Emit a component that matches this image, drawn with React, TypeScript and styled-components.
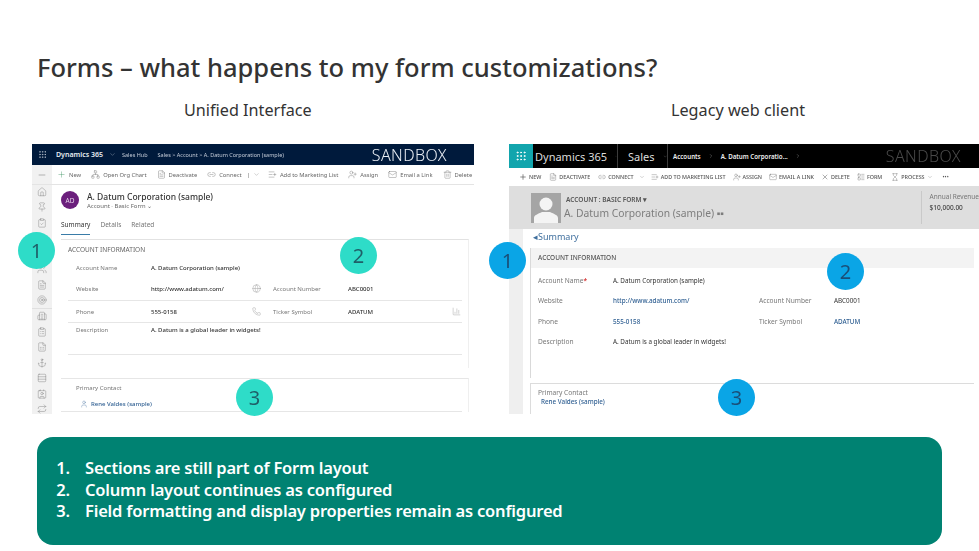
import styled, { createGlobalStyle } from "styled-components"
import {
    Plus, Network, FileText, Link2, ChevronDown, ListPlus, UserPlus, Mail, Trash2, Minus, Home, Pin,
    ClipboardCheck, Globe, Phone, BarChart3, User, X, LayoutList, Hourglass, Grip, Users, FileSpreadsheet,
    Building2, Anchor, Contact, Repeat, ClipboardList, Target, ChevronRight, Rows3
} from "lucide-react"

const GlobalStyle = createGlobalStyle`
    html, body {
        margin: 0;
        padding: 0;
        background: #fff;
        font-family: "Noto Sans", "Open Sans", sans-serif;
    }
`

const Slide = styled.div`
    width: 979px;
    height: 551px;
    overflow: hidden;
    position: relative;
    display: flex;
    flex-direction: column;
`

const Title = styled.h1`
    margin: 50px 0 0 37px;
    height: 34px;
    line-height: 34px;
    font-size: 25.5px;
    font-weight: 500;
    color: #333;
    white-space: nowrap;
`

const Panes = styled.div`
    display: flex;
    margin: 14px 0 0 32px;
    gap: 35px;
`

const Pane = styled.div<{ $width: number }>`
    width: ${({ $width }) => $width}px;
    display: flex;
    flex-direction: column;
`

const PaneTitle = styled.div<{ $indent: number }>`
    height: 24px;
    line-height: 24px;
    margin-left: ${({ $indent }) => $indent}px;
    font-size: 16.2px;
    color: #333;
    white-space: nowrap;
`

const Shot = styled.div`
    height: 270px;
    margin-top: 22px;
    position: relative;
    display: flex;
    flex-direction: column;
    background: #fff;
`

const ShotInner = styled.div`
    flex: 1;
    min-height: 0;
    display: flex;
    flex-direction: column;
    overflow: hidden;
    filter: blur(0.35px);
`

const Badge = styled.div<{ $x: number; $y: number; $blue?: boolean }>`
    position: absolute;
    left: ${({ $x }) => $x}px;
    top: ${({ $y }) => $y}px;
    width: 37px;
    height: 37px;
    border-radius: 50%;
    background: ${({ $blue }) => ($blue ? "#0aa5e6" : "#2edcc8")};
    color: ${({ $blue }) => ($blue ? "#1a4f78" : "#1f5f68")};
    display: flex;
    align-items: center;
    justify-content: center;
    font-size: 20px;
    z-index: 2;
`

/* unified interface */
const UciNav = styled.div`
    height: 21px;
    background: #001a3c;
    color: #e8edf3;
    display: flex;
    align-items: center;
    font-size: 5.5px;
    white-space: nowrap;
    padding-left: 6px;
`

const UciBrand = styled.span`
    font-size: 7px;
    font-weight: 600;
    margin-left: 9px;
    width: 53px;
`

const UciCrumb = styled.span<{ $gap?: number }>`
    margin-left: ${({ $gap }) => $gap ?? 0}px;
    color: #c4ccd8;
`

const Sandbox = styled.span<{ $dark?: boolean; $right?: number }>`
    margin-left: auto;
    margin-right: ${({ $right }) => $right ?? 0}px;
    font-size: 16px;
    font-weight: 300;
    letter-spacing: 0.4px;
    color: ${({ $dark }) => ($dark ? "#4a4a4a" : "#e8edf3")};
`

const UciCommands = styled.div`
    height: 20px;
    display: flex;
    align-items: center;
    border-bottom: 1px solid #e4e4e4;
    box-sizing: border-box;
`

const UciMenuCell = styled.div`
    width: 20px;
    height: 100%;
    background: #f1f1f1;
    display: flex;
    align-items: center;
    justify-content: center;
    color: #555;
    flex-shrink: 0;
`

const Command = styled.span<{ $x: number }>`
    display: flex;
    align-items: center;
    gap: 3px;
    margin-left: ${({ $x }) => $x}px;
    font-size: 5.8px;
    color: #666;
    white-space: nowrap;
`

const UciBody = styled.div`
    flex: 1;
    min-height: 0;
    display: flex;
`

const UciSide = styled.div`
    width: 20px;
    flex-shrink: 0;
    background: #f1f1f1;
    display: flex;
    flex-direction: column;
    align-items: center;
    gap: 5.5px;
    padding-top: 2px;
    color: #777;
`

const SideGap = styled.span`
    height: 10px;
    flex-shrink: 0;
`

const SideRule = styled.span`
    width: 20px;
    height: 1px;
    margin: -3px 0;
    flex-shrink: 0;
    background: #e0e0e0;
`

const UciMain = styled.div`
    width: 408px;
    margin-left: 9px;
`

const UciHead = styled.div`
    display: flex;
    align-items: center;
    gap: 8px;
    height: 24px;
    margin-top: 3px;
`

const Avatar = styled.div`
    width: 18px;
    height: 18px;
    border-radius: 50%;
    background: #6b1f7c;
    color: #e6d4ea;
    font-size: 6.5px;
    display: flex;
    align-items: center;
    justify-content: center;
`

const UciName = styled.div`
    font-size: 8.5px;
    font-weight: 500;
    line-height: 11px;
    color: #333;
`

const UciSub = styled.div`
    font-size: 6px;
    line-height: 8px;
    color: #666;
`

const Tabs = styled.div`
    display: flex;
    gap: 10px;
    margin-top: 8px;
    height: 19px;
`

const Tab = styled.span<{ $on?: boolean }>`
    font-size: 6.5px;
    line-height: 10px;
    height: 14px;
    color: ${({ $on }) => ($on ? "#333" : "#777")};
    border-bottom: ${({ $on }) => ($on ? "1.5px solid #3a7ca8" : "none")};
`

const UciCard = styled.div`
    border-top: 1px solid #e2e2e2;
    border-right: 1px solid #efefef;
    height: 129px;
    padding-left: 7px;
    box-sizing: border-box;
`

const UciSection = styled.div`
    font-size: 6.5px;
    color: #666;
    height: 19px;
    line-height: 19px;
`

const UciRow = styled.div<{ $height: number; $line?: boolean; $top?: boolean }>`
    height: ${({ $height }) => $height}px;
    margin-right: 6px;
    padding-left: 8px;
    display: grid;
    grid-template-columns: 75px 98px 24px 75px 104px 10px;
    align-items: ${({ $top }) => ($top ? "start" : "center")};
    padding-top: ${({ $top }) => ($top ? 3 : 0)}px;
    box-sizing: border-box;
    border-bottom: ${({ $line }) => ($line ? "1px solid #e6e6e6" : "none")};
    color: #888;
`

const RowIcon = styled.span`
    display: flex;
    margin-left: 3px;
`

const Label = styled.span<{ $size?: number }>`
    font-size: ${({ $size }) => $size ?? 6}px;
    color: #777;
    white-space: nowrap;
`

const Value = styled.span<{ $link?: boolean; $size?: number; $plain?: boolean }>`
    font-size: ${({ $size }) => $size ?? 6}px;
    font-weight: ${({ $plain }) => ($plain ? 400 : 500)};
    color: ${({ $link }) => ($link ? "#2f5f92" : "#333")};
    white-space: nowrap;
`

const UciContact = styled.div`
    margin-top: 10px;
    border-top: 1px solid #e6e6e6;
    border-right: 1px solid #efefef;
    padding-left: 15px;
`

const ContactTitle = styled.div`
    height: 17px;
    display: flex;
    align-items: center;
`

const ContactLink = styled.div`
    display: flex;
    align-items: center;
    gap: 3px;
    padding-left: 4px;
    margin-left: -15px;
    padding-left: 19px;
    height: 15px;
    color: #2f5f92;
    margin-right: 6px;
    border-bottom: 1px solid #e6e6e6;
`

/* legacy web client */
const LegacyNav = styled.div`
    height: 24px;
    background: #000;
    color: #e6e6e6;
    display: flex;
    align-items: center;
    white-space: nowrap;
    padding-right: 18px;
`

const Tile = styled.div`
    width: 24px;
    height: 24px;
    background: #12a5ad;
    color: #fff;
    display: flex;
    align-items: center;
    justify-content: center;
`

const NavCell = styled.div<{ $width: number; $line?: boolean; $pad?: number }>`
    width: ${({ $width }) => $width}px;
    height: 100%;
    display: flex;
    align-items: center;
    gap: 8px;
    padding-left: ${({ $pad }) => $pad ?? 2}px;
    box-sizing: border-box;
    font-size: 11px;
    color: #ddd;
    border-right: ${({ $line }) => ($line ? "1px solid #3c3c3c" : "none")};
`

const NavCrumbs = styled.div`
    display: flex;
    align-items: center;
    gap: 7px;
    font-size: 6.2px;
    font-weight: 600;
    margin-left: 5px;
    color: #eee;
`

const LegacyCommands = styled.div`
    height: 18px;
    display: flex;
    align-items: center;
    padding-left: 2px;
`

const LegacyCommand = styled.span<{ $x: number }>`
    display: flex;
    align-items: center;
    gap: 2px;
    margin-left: ${({ $x }) => $x}px;
    font-size: 5.4px;
    font-weight: 500;
    color: #555;
    white-space: nowrap;
`

const LegacyHead = styled.div`
    height: 43px;
    background: #dedede;
    display: flex;
    align-items: center;
    padding-left: 22px;
`

const Portrait = styled.svg`
    width: 30px;
    height: 30px;
    flex-shrink: 0;
`

const LegacyTitles = styled.div`
    margin-left: 3px;
    width: 359px;
`

const FormName = styled.div`
    font-size: 6.5px;
    font-weight: 600;
    color: #555;
    line-height: 11px;
    margin-left: 2px;
`

const RecordName = styled.div`
    font-size: 10.3px;
    line-height: 17px;
    color: #7d7d7d;
    white-space: nowrap;
`

const Revenue = styled.div`
    height: 33px;
    border-left: 1px solid #c9c9c9;
    padding-left: 8px;
    white-space: nowrap;
`

const RevenueLabel = styled.div`
    font-size: 6.5px;
    line-height: 11px;
    color: #777;
`

const RevenueValue = styled.div`
    font-size: 6.5px;
    line-height: 11px;
    color: #444;
    font-weight: 500;
`

const LegacyBody = styled.div`
    flex: 1;
    min-height: 0;
    display: flex;
`

const LegacyStrip = styled.div`
    width: 14px;
    flex-shrink: 0;
    background: #efefef;
`

const LegacyMain = styled.div`
    flex: 1;
    padding-left: 7px;
    padding-right: 5px;
`

const LegacySummary = styled.div`
    height: 19px;
    line-height: 15px;
    font-size: 9px;
    color: #3f6f9e;
    margin-left: 3px;
`

const LegacyForm = styled.div`
    height: 130px;
    margin-bottom: 5px;
    border-left: 1px solid #d9d9d9;
`

const LegacySection = styled.div`
    height: 20px;
    line-height: 20px;
    background: #f3f3f3;
    font-size: 6.5px;
    font-weight: 500;
    color: #555;
    padding-left: 7px;
    margin-bottom: 2px;
`

const LegacyRow = styled.div`
    height: 20.5px;
    padding-left: 7px;
    display: grid;
    grid-template-columns: 75px 146px 75px 1fr;
    align-items: center;
`

const Required = styled.span`
    color: #c00;
`

const LegacyContact = styled.div`
    border-top: 1px solid #dcdcdc;
    border-left: 1px solid #dcdcdc;
    padding: 4px 0 0 7px;
    height: 31px;
    box-sizing: border-box;
`

const LegacyContactLink = styled.div`
    margin-left: 3px;
    height: 9px;
    display: flex;
    align-items: center;
`

const LegacyContactLabel = styled.div`
    height: 9px;
    display: flex;
    align-items: center;
`

/* summary box */
const Summary = styled.ol`
    margin: 23px 0 0 37px;
    width: 905px;
    height: 108px;
    box-sizing: border-box;
    background: #008272;
    border-radius: 16px;
    padding: 20px 0 0 37px;
    color: #fff;
    font-size: 16.5px;
    font-weight: 600;
    line-height: 21.6px;
    letter-spacing: -0.2px;
    & li {
        padding-left: 11px;
    }
`

const ic = { strokeWidth: 1, size: 9 }
const side = { strokeWidth: 1, size: 10 }
const legacyIc = { strokeWidth: 1, size: 8 }

function UnifiedShot() {
    return (
        <Shot>
            <ShotInner>
                <UciNav>
                    <Grip size={9} strokeWidth={1.2}/>
                    <UciBrand>Dynamics 365</UciBrand>
                    <ChevronDown size={7} strokeWidth={1}/>
                    <UciCrumb $gap={6}>Sales Hub</UciCrumb>
                    <UciCrumb $gap={10}>Sales &gt; Account &gt; A. Datum Corporation (sample)</UciCrumb>
                    <Sandbox $right={27}>SANDBOX</Sandbox>
                </UciNav>
                <UciCommands>
                    <UciMenuCell><Minus size={10} strokeWidth={1}/></UciMenuCell>
                    <Command $x={5}><Plus size={9} strokeWidth={1} color="#2e8b57"/>New</Command>
                    <Command $x={10}><Network {...ic}/>Open Org Chart</Command>
                    <Command $x={10}><FileText {...ic}/>Deactivate</Command>
                    <Command $x={10}><Link2 {...ic}/>Connect</Command>
                    <Command $x={5}>|<ChevronDown size={7} strokeWidth={1}/></Command>
                    <Command $x={8}><ListPlus {...ic}/>Add to Marketing List</Command>
                    <Command $x={10}><UserPlus {...ic}/>Assign</Command>
                    <Command $x={10}><Mail {...ic}/>Email a Link</Command>
                    <Command $x={10}><Trash2 {...ic}/>Delete</Command>
                </UciCommands>
                <UciBody>
                    <UciSide>
                        <Home {...side}/><Pin {...side}/><ClipboardCheck {...side}/><SideGap/>
                        <SideGap/><Users {...side}/><FileText {...side}/><Target {...side}/><SideRule/>
                        <Building2 {...side}/><ClipboardList {...side}/><FileSpreadsheet {...side}/><Anchor {...side}/>
                        <Rows3 {...side}/><Contact {...side}/><Repeat {...side}/>
                    </UciSide>
                    <UciMain>
                        <UciHead>
                            <Avatar>AD</Avatar>
                            <div>
                                <UciName>A. Datum Corporation (sample)</UciName>
                                <UciSub>Account · Basic Form ⌄</UciSub>
                            </div>
                        </UciHead>
                        <Tabs>
                            <Tab $on>Summary</Tab>
                            <Tab>Details</Tab>
                            <Tab>Related</Tab>
                        </Tabs>
                        <UciCard>
                            <UciSection>ACCOUNT INFORMATION</UciSection>
                            <UciRow $height={18}>
                                <Label>Account Name</Label>
                                <Value>A. Datum Corporation (sample)</Value>
                            </UciRow>
                            <UciRow $height={24} $line>
                                <Label>Website</Label>
                                <Value>http://www.adatum.com/</Value>
                                <RowIcon><Globe {...ic}/></RowIcon>
                                <Label>Account Number</Label>
                                <Value>ABC0001</Value>
                            </UciRow>
                            <UciRow $height={22} $line>
                                <Label>Phone</Label>
                                <Value>555-0158</Value>
                                <RowIcon><Phone {...ic}/></RowIcon>
                                <Label>Ticker Symbol</Label>
                                <Value>ADATUM</Value>
                                <BarChart3 {...ic}/>
                            </UciRow>
                            <UciRow $height={32} $line $top>
                                <Label>Description</Label>
                                <Value>A. Datum is a global leader in widgets!</Value>
                            </UciRow>
                        </UciCard>
                        <UciContact>
                            <ContactTitle><Label>Primary Contact</Label></ContactTitle>
                            <ContactLink>
                                <User size={8} strokeWidth={1}/>
                                <Value $link>Rene Valdes (sample)</Value>
                            </ContactLink>
                        </UciContact>
                    </UciMain>
                </UciBody>
            </ShotInner>
            <Badge $x={-14} $y={88}>1</Badge>
            <Badge $x={308} $y={93}>2</Badge>
            <Badge $x={204} $y={235}>3</Badge>
        </Shot>
    )
}

function LegacyShot() {
    return (
        <Shot>
            <ShotInner>
                <LegacyNav>
                    <Tile><Grip size={12} strokeWidth={2}/></Tile>
                    <NavCell $width={85} $line>Dynamics 365<ChevronDown size={7} strokeWidth={1}/></NavCell>
                    <NavCell $width={50} $line $pad={10}>Sales<ChevronDown size={7} strokeWidth={1}/></NavCell>
                    <NavCrumbs>
                        Accounts<ChevronRight size={6} strokeWidth={1}/>A. Datum Corporatio...<ChevronRight size={6} strokeWidth={1}/>
                    </NavCrumbs>
                    <Sandbox $dark>SANDBOX</Sandbox>
                </LegacyNav>
                <LegacyCommands>
                    <LegacyCommand $x={8}><Plus size={8} strokeWidth={2}/>NEW</LegacyCommand>
                    <LegacyCommand $x={8}><FileText {...legacyIc}/>DEACTIVATE</LegacyCommand>
                    <LegacyCommand $x={8}><Link2 {...legacyIc}/>CONNECT</LegacyCommand>
                    <LegacyCommand $x={5}><ChevronDown size={6} strokeWidth={1}/></LegacyCommand>
                    <LegacyCommand $x={6}><ListPlus {...legacyIc}/>ADD TO MARKETING LIST</LegacyCommand>
                    <LegacyCommand $x={7}><UserPlus {...legacyIc}/>ASSIGN</LegacyCommand>
                    <LegacyCommand $x={7}><Mail {...legacyIc}/>EMAIL A LINK</LegacyCommand>
                    <LegacyCommand $x={7}><X size={8} strokeWidth={1.4}/>DELETE</LegacyCommand>
                    <LegacyCommand $x={7}><LayoutList {...legacyIc}/>FORM</LegacyCommand>
                    <LegacyCommand $x={9}><Hourglass {...legacyIc}/>PROCESS<ChevronDown size={6} strokeWidth={1}/></LegacyCommand>
                    <LegacyCommand $x={10}>•••</LegacyCommand>
                </LegacyCommands>
                <LegacyHead>
                    <Portrait viewBox="0 0 30 30">
                        <rect width="30" height="30" fill="#a5a5a5"/>
                        <circle cx="15" cy="11" r="6.5" fill="#f4f4f4"/>
                        <path d="M3 30v-5c0-3 4-4 8-6h8c4 2 8 3 8 6v5z" fill="#f4f4f4"/>
                    </Portrait>
                    <LegacyTitles>
                        <FormName>ACCOUNT : BASIC FORM ▾</FormName>
                        <RecordName>A. Datum Corporation (sample) ▪▪</RecordName>
                    </LegacyTitles>
                    <Revenue>
                        <RevenueLabel>Annual Revenue</RevenueLabel>
                        <RevenueValue>$10,000.00</RevenueValue>
                    </Revenue>
                </LegacyHead>
                <LegacyBody>
                    <LegacyStrip/>
                    <LegacyMain>
                        <LegacySummary>◂Summary</LegacySummary>
                        <LegacyForm>
                            <LegacySection>ACCOUNT INFORMATION</LegacySection>
                            <LegacyRow>
                                <Label $size={6.6}>Account Name<Required>*</Required></Label>
                                <Value $plain $size={6.3}>A. Datum Corporation (sample)</Value>
                            </LegacyRow>
                            <LegacyRow>
                                <Label $size={6.6}>Website</Label>
                                <Value $link $size={6.3}>http://www.adatum.com/</Value>
                                <Label $size={6.6}>Account Number</Label>
                                <Value $plain $size={6.3}>ABC0001</Value>
                            </LegacyRow>
                            <LegacyRow>
                                <Label $size={6.6}>Phone</Label>
                                <Value $link $size={6.3}>555-0158</Value>
                                <Label $size={6.6}>Ticker Symbol</Label>
                                <Value $link $size={6.3}>ADATUM</Value>
                            </LegacyRow>
                            <LegacyRow>
                                <Label $size={6.6}>Description</Label>
                                <Value $plain $size={6.3}>A. Datum is a global leader in widgets!</Value>
                            </LegacyRow>
                        </LegacyForm>
                        <LegacyContact>
                            <LegacyContactLabel><Label $size={6.6}>Primary Contact</Label></LegacyContactLabel>
                            <LegacyContactLink><Value $link $size={6.3}>Rene Valdes (sample)</Value></LegacyContactLink>
                        </LegacyContact>
                    </LegacyMain>
                </LegacyBody>
            </ShotInner>
            <Badge $blue $x={-20} $y={98}>1</Badge>
            <Badge $blue $x={318} $y={109}>2</Badge>
            <Badge $blue $x={209} $y={235}>3</Badge>
        </Shot>
    )
}

export default function App() {
    return (
        <Slide>
            <GlobalStyle/>
            <Title>Forms – what happens to my form customizations?</Title>
            <Panes>
                <Pane $width={442}>
                    <PaneTitle $indent={152}>Unified Interface</PaneTitle>
                    <UnifiedShot/>
                </Pane>
                <Pane $width={470}>
                    <PaneTitle $indent={162}>Legacy web client</PaneTitle>
                    <LegacyShot/>
                </Pane>
            </Panes>
            <Summary>
                <li>Sections are still part of Form layout</li>
                <li>Column layout continues as configured</li>
                <li>Field formatting and display properties remain as configured</li>
            </Summary>
        </Slide>
    )
}
